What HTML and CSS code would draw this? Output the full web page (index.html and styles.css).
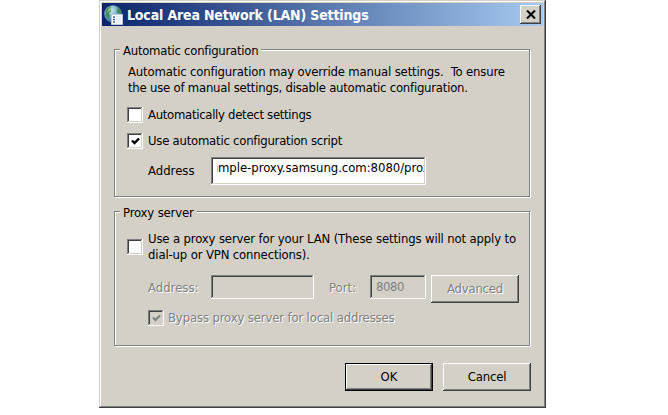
FILE: index.html
```html
<!DOCTYPE html>
<html lang="en">
<head>
<meta charset="utf-8">
<title>Local Area Network (LAN) Settings</title>
<link rel="stylesheet" href="styles.css">
</head>
<body>
<main class="window">
  <header class="titlebar">
    <svg class="app-icon" width="20" height="20" viewBox="0 0 20 20">
      <defs><radialGradient id="globe" cx=".4" cy=".3" r=".7"><stop offset="0" stop-color="#d0eaf2"/><stop offset=".55" stop-color="#6aa9c0"/><stop offset="1" stop-color="#2f6690"/></radialGradient></defs>
      <circle cx="9" cy="9" r="8.800" fill="url(#globe)"/>
      <path d="M1.500 6Q3.500 2 7 1L6 4L7.500 6L5 8L6 11L4 14Q1 10 1.500 6ZM12 1Q17 3 17.500 8L14 8.500L12.500 6L14 4Z" fill="#3f8a55"/>
      <path d="M5 3L8 2L6 6L3 8Z" fill="#8cc07c"/>
      <path d="M7.500 9.500H18.500V19.500H7.500Z" fill="#f4f8fb" stroke="#bccbdc"/>
      <path d="M9 12H11M9 14.500H11M9 17H11" stroke="#406d9b" stroke-width="1.300"/>
      <path d="M12.500 12H17M12.500 14.500H17M12.500 17H17" stroke="#dce5ec"/>
    </svg>
    <h1 class="title">Local Area Network (LAN) Settings</h1>
    <button class="close" aria-label="Close"><svg width="10" height="9" viewBox="0 0 10 9"><path d="M1 .5L9 8.500M9 .5L1 8.500" stroke="#000" stroke-width="2"/></svg></button>
  </header>

  <section class="group automatic">
    <h2 class="legend"><span class="t-auto">Automatic configuration</span></h2>
    <p class="intro"><span class="t-intro1">Automatic configuration may override manual settings.&nbsp; To ensure</span><br><span class="t-intro2">the use of manual settings, disable automatic configuration.</span></p>
    <div class="check-row">
      <span class="box"></span><span class="t-detect">Automatically detect settings</span>
    </div>
    <div class="check-row second">
      <span class="box"><svg width="9" height="9" viewBox="0 0 9 9"><path d="M1 3.500L3.500 6L8 1.500" fill="none" stroke="#000" stroke-width="2.400"/></svg></span><span class="t-script">Use automatic configuration script</span>
    </div>
    <div class="script-row">
      <span class="label">Address</span>
      <div class="field url"><span class="sliver"></span><div class="url-view"><span class="t-url">mple-proxy.samsung.com:8080/prox</span></div></div>
    </div>
  </section>

  <section class="group proxy">
    <h2 class="legend"><span class="t-proxy">Proxy server</span></h2>
    <div class="proxy-row">
      <span class="box"></span>
      <p class="proxy-text"><span class="t-lan">Use a proxy server for your LAN (These settings will not apply to</span><br><span class="t-lan">dial-up or VPN connections).</span></p>
    </div>
    <div class="server-row disabled">
      <span class="label">Address:</span>
      <div class="field off host"></div>
      <span class="port-label">Port:</span>
      <div class="field off port">8080</div>
      <button class="button advanced">Advanced</button>
    </div>
    <div class="bypass-row disabled">
      <span class="box off"><svg width="9" height="9" viewBox="0 0 9 9"><path d="M1 3.500L3.500 6L8 1.500" fill="none" stroke="#808080" stroke-width="2.200"/></svg></span><span class="t-bypass">Bypass proxy server for local addresses</span>
    </div>
  </section>

  <footer class="actions">
    <button class="button default">OK</button>
    <button class="button cancel">Cancel</button>
  </footer>
</main>
</body>
</html>
```
FILE: styles.css
```css
* { box-sizing: border-box; }
body {
  margin: 0;
  background: #fff;
  color: #000;
  font: 13px/16px "DejaVu Sans Condensed", "DejaVu Sans", sans-serif;
  font-stretch: condensed;
  white-space: nowrap;
  overflow: hidden;
}
h1, h2, p { margin: 0; font-size: inherit; font-weight: normal; }
button { padding: 0; border: 0; font: inherit; color: inherit; }

.window {
  display: flex;
  flex-direction: column;
  width: 447px;
  height: 408px;
  margin-left: 99px;
  padding: 3px 3px 0 3px;
  background: #d4d0c8;
  box-shadow: inset -1px -1px #404040, inset 1px 1px #d4d0c8, inset -2px -2px #808080, inset 2px 2px #fff;
}
.titlebar {
  display: flex;
  align-items: center;
  flex: none;
  height: 23px;
  padding: 0 2px 0 2px;
  background: linear-gradient(90deg, #0a246a, #a6caf0);
}
.app-icon { flex: none; }
.title { margin-left: 3px; color: #fff; font-weight: bold; font-size: 14px; letter-spacing: -.16px; }
.close {
  display: flex;
  align-items: center;
  justify-content: center;
  width: 21px;
  height: 19px;
  margin-left: auto;
  background: #d4d0c8;
  box-shadow: inset -1px -1px #404040, inset 1px 1px #fff, inset -2px -2px #808080;
}

.group {
  flex: none;
  width: 416px;
  margin-left: 12px;
  border: 1px solid #808080;
  box-shadow: 1px 1px #fff, inset 1px 1px #fff;
}
.automatic { height: 148px; margin-top: 23px; }
.proxy { height: 135px; margin-top: 14px; }
.legend {
  width: max-content;
  height: 16px;
  margin: -7px 0 0 5px;
  padding: 0 3px;
  background: #d4d0c8;
}
.intro { margin: 5px 0 0 13px; }

.box {
  display: flex;
  align-items: center;
  justify-content: center;
  flex: none;
  width: 16px;
  height: 16px;
  margin-right: 5px;
  background: #fff;
  box-shadow: inset -1px -1px #fff, inset 1px 1px #808080, inset -2px -2px #d4d0c8, inset 2px 2px #404040;
}
.check-row { display: flex; height: 16px; margin: 11px 0 0 12px; }
.second { margin-top: 10px; }
.script-row { display: flex; align-items: center; height: 28px; margin: 8px 0 0 33px; }
.label { width: 63px; flex: none; }
.field {
  flex: none;
  background: #fff;
  box-shadow: inset -1px -1px #fff, inset 1px 1px #808080, inset -2px -2px #d4d0c8, inset 2px 2px #404040;
}
.url { display: flex; width: 215px; height: 28px; padding: 3px 2px 0 6px; }
.url-view { flex: 1; min-width: 0; overflow: hidden; }
.sliver { width: 1px; height: 6px; margin-top: 6px; background: #b4b4e4; }

.proxy-row { display: flex; align-items: center; margin: 10px 0 0 12px; }
.server-row { display: flex; margin: 12px 0 0 33px; height: 28px; }
.disabled { color: #808080; text-shadow: 1px 1px #fff; }
.off { background: #d4d0c8; }
.server-row .label, .port-label { padding-top: 5px; }
.host { width: 103px; height: 24px; }
.port-label { width: 41px; margin-left: 15px; }
.port { width: 56px; height: 24px; padding: 4px 0 0 6px; letter-spacing: -.4px; text-shadow: none; }
.advanced { margin-left: 5px; letter-spacing: -.2px; }
.cancel { letter-spacing: -.2px; }
.bypass-row { display: flex; margin: 7px 0 0 33px; }
.bypass-row .box { margin-right: 4px; }

.t-auto { letter-spacing: -.26px; }
.t-intro1 { letter-spacing: -.165px; }
.t-intro2 { letter-spacing: -.23px; }
.t-detect { letter-spacing: -.3px; }
.t-script { letter-spacing: -.24px; }
.t-url { letter-spacing: -.04px; }
.t-proxy { letter-spacing: -.17px; }
.t-lan { letter-spacing: -.15px; }
.t-bypass { letter-spacing: -.15px; }

.button {
  flex: none;
  width: 88px;
  height: 28px;
  background: #d4d0c8;
  text-shadow: inherit;
  box-shadow: inset -1px -1px #404040, inset 1px 1px #fff, inset -2px -2px #808080;
}
.default { border: 1px solid #000; }
.actions { display: flex; justify-content: flex-end; gap: 10px; margin: 17px 12px 0 0; }
```
